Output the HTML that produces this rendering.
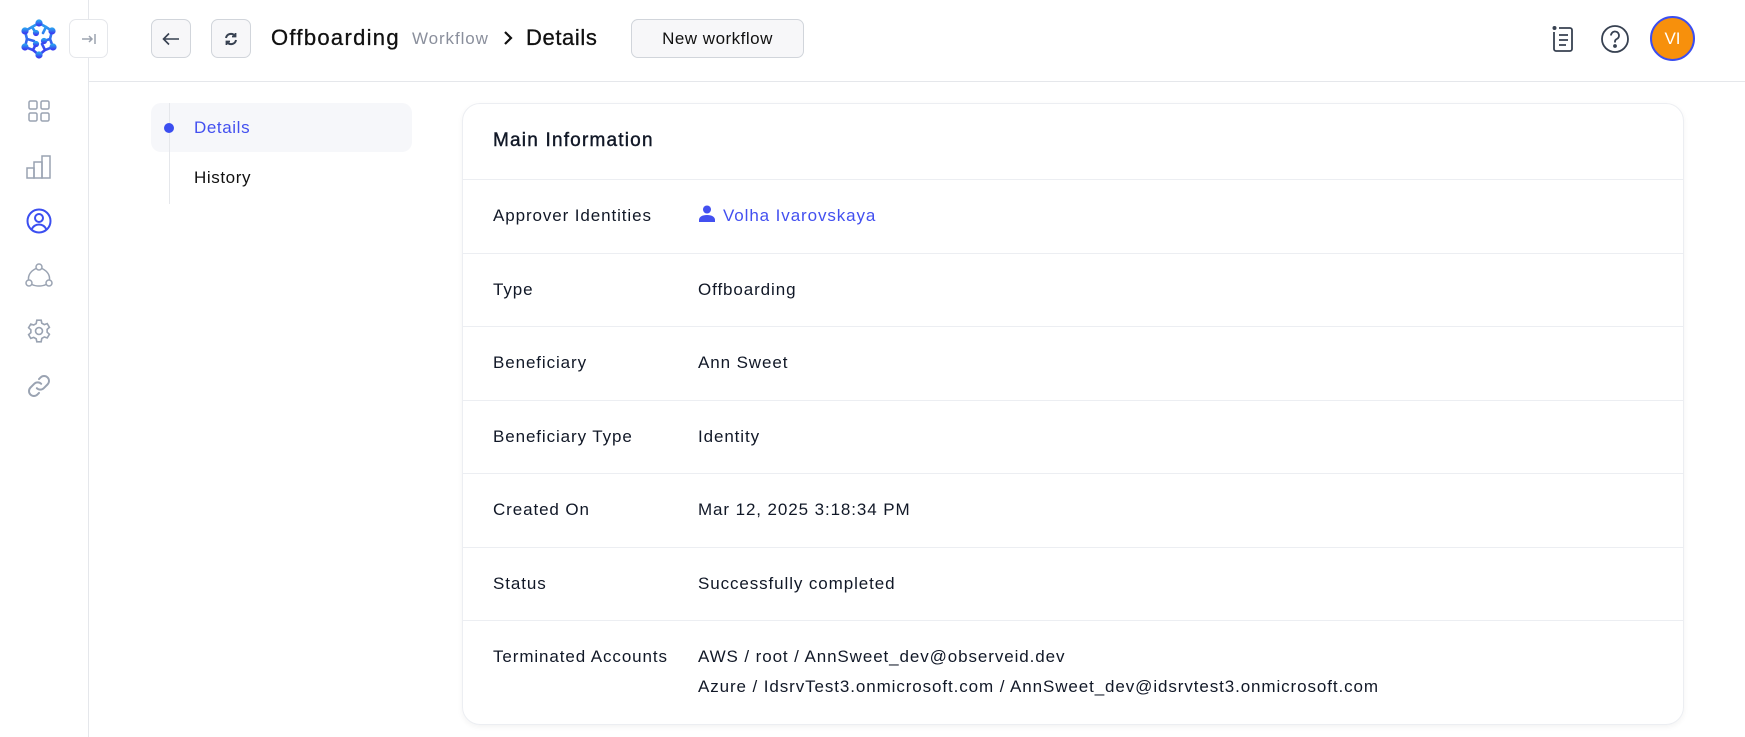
<!DOCTYPE html>
<html><head><meta charset="utf-8"><style>
*{box-sizing:border-box;margin:0;padding:0}
body{width:1745px;height:737px;background:#fff;font-family:"Liberation Sans",Arial,sans-serif;color:#111827;position:relative;overflow:hidden}
.abs{position:absolute}
.sb{left:0;top:0;width:89px;height:737px;border-right:1px solid #e5e7eb}
.hdr{left:89px;top:81px;width:1656px;height:1px;background:#e5e7eb}
.btn{border:1px solid #d1d5db;border-radius:7px;background:#f7f7f9;display:flex;align-items:center;justify-content:center}
.t{white-space:nowrap}
.card{left:462px;top:103px;width:1222px;height:622px;border:1px solid #eceef2;border-radius:18px;box-shadow:0 2px 6px rgba(0,0,0,.05)}
.sep{left:462px;width:1222px;height:1px;background:#eceef2}
.lbl{left:493px;font-size:17px;letter-spacing:0.9px;color:#111827}
.val{left:698px;font-size:17px;letter-spacing:0.9px;color:#111827}
</style></head><body>
<div class="abs sb"></div>
<div class="abs hdr"></div>
<svg class="abs" style="left:19px;top:19px" width="40" height="40" viewBox="0 0 40 40">
<defs><linearGradient id="g" x1="0" y1="0" x2="0" y2="1"><stop offset="0" stop-color="#2b9bf0"/><stop offset="1" stop-color="#3a3ff0"/></linearGradient></defs>
<g stroke="url(#g)" stroke-width="2.6" fill="url(#g)" stroke-linecap="round">
<path d="M20 4 L27 8 L33 12 L31 20 L34 28 L26 31 L20 36 L14 31 L6 28 L8 20 L6 12 L13 8 Z" fill="none"/>
<path d="M13 8 L17 14 M27 8 L24 14 M31 20 L25 22 M26 31 L23 25 M14 31 L17 25 M8 20 L15 22" fill="none"/>
<circle cx="20" cy="4" r="2.3"/><circle cx="33" cy="12" r="2.3"/><circle cx="34" cy="28" r="2.3"/><circle cx="20" cy="36" r="2.3"/><circle cx="6" cy="28" r="2.3"/><circle cx="6" cy="12" r="2.3"/>
<circle cx="17" cy="14" r="1.8"/><circle cx="25" cy="22" r="1.8"/><circle cx="17" cy="25" r="1.8"/>
</g></svg>
<div class="abs btn" style="left:69px;top:19px;width:39px;height:39px;background:#fff;border-color:#e5e7eb"><svg width="16" height="14" viewBox="0 0 16 14"><path d="M1 7h10M8 4l3 3-3 3M14 2v10" stroke="#9ca3af" stroke-width="1.5" fill="none"/></svg></div>
<svg class="abs" style="left:27px;top:99px" width="24" height="24" viewBox="0 0 24 24" fill="none" stroke="#9aa3b2" stroke-width="1.5"><rect x="2" y="2" width="8" height="8" rx="1.5"/><rect x="14" y="2" width="8" height="8" rx="1.5"/><rect x="2" y="14" width="8" height="8" rx="1.5"/><rect x="14" y="14" width="8" height="8" rx="1.5"/></svg>
<svg class="abs" style="left:26px;top:155px" width="26" height="24" viewBox="0 0 26 24" fill="none" stroke="#9aa3b2" stroke-width="1.5"><rect x="1" y="13" width="7" height="10"/><rect x="8" y="7" width="8" height="16"/><rect x="16" y="1" width="8" height="22"/></svg>
<svg class="abs" style="left:26px;top:208px" width="26" height="26" viewBox="0 0 26 26" fill="none" stroke="#3b4ef0" stroke-width="2"><circle cx="13" cy="13" r="11.5"/><circle cx="13" cy="10" r="4"/><path d="M5.5 21.5c2-4 5-5 7.5-5s5.5 1 7.5 5"/></svg>
<svg class="abs" style="left:25px;top:263px" width="28" height="26" viewBox="0 0 28 26" fill="none" stroke="#9aa3b2" stroke-width="1.5"><circle cx="14" cy="4" r="3"/><circle cx="4" cy="20" r="3"/><circle cx="24" cy="20" r="3"/><path d="M11 5.5C6 8 3 12 3.5 17M17 5.5C22 8 25 12 24.5 17M7 21.5c4 2 10 2 14 0"/></svg>
<svg class="abs" style="left:26px;top:318px" width="26" height="26" viewBox="0 0 24 24" fill="none" stroke="#9aa3b2" stroke-width="1.5"><circle cx="12" cy="12" r="3.2"/><path d="M10 2h4l.6 2.8 2.3 1.3 2.7-.9 2 3.4-2.1 1.9v2.6l2.1 1.9-2 3.4-2.7-.9-2.3 1.3L14 22h-4l-.6-2.8-2.3-1.3-2.7.9-2-3.4 2.1-1.9v-2.6L2.4 9l2-3.4 2.7.9 2.3-1.3z"/></svg>
<svg class="abs" style="left:26px;top:373px" width="26" height="26" viewBox="0 0 24 24" fill="none" stroke="#9aa3b2" stroke-width="1.8" stroke-linecap="round"><path d="M10 14a4.5 4.5 0 0 0 6.4 0l3.5-3.5a4.5 4.5 0 0 0-6.4-6.4l-1.5 1.5M14 10a4.5 4.5 0 0 0-6.4 0l-3.5 3.5a4.5 4.5 0 0 0 6.4 6.4l1.5-1.5"/></svg>
<div class="abs btn" style="left:151px;top:19px;width:40px;height:39px"><svg width="18" height="14" viewBox="0 0 18 14"><path d="M17 7H2M7 1.5L1.5 7 7 12.5" stroke="#374151" stroke-width="1.6" fill="none"/></svg></div>
<div class="abs btn" style="left:211px;top:19px;width:40px;height:39px"><svg width="14" height="14" viewBox="0 0 14 14" fill="none" stroke="#374151" stroke-width="2"><path d="M2 6a5 5 0 0 1 9-2M12 8a5 5 0 0 1-9 2"/><path d="M11.5 1v3.5H8M2.5 13V9.5H6" stroke-width="1.8"/></svg></div>
<div class="abs t" style="left:271px;top:24px;font-size:22px;line-height:28px;color:#111;letter-spacing:1.3px;-webkit-text-stroke:0.3px #111">Offboarding</div>
<div class="abs t" style="left:412px;top:29px;font-size:17px;line-height:20px;color:#8a8f9c;letter-spacing:0.9px">Workflow</div>
<svg class="abs" style="left:503px;top:30px" width="10" height="16" viewBox="0 0 10 16"><path d="M2 2l6 6-6 6" stroke="#111" stroke-width="2.2" fill="none"/></svg>
<div class="abs t" style="left:526px;top:24px;font-size:22px;line-height:28px;color:#111;letter-spacing:0.6px;-webkit-text-stroke:0.3px #111">Details</div>
<div class="abs btn" style="left:631px;top:19px;width:173px;height:39px;font-size:17px;letter-spacing:0.5px;color:#111">New workflow</div>
<svg class="abs" style="left:1551px;top:25px" width="26" height="28" viewBox="0 0 26 28" fill="none" stroke="#374151" stroke-width="1.8"><circle cx="3.5" cy="3" r="2" fill="#374151" stroke="none"/><path d="M3 7v17a2 2 0 0 0 2 2h14a2 2 0 0 0 2-2V5a2 2 0 0 0-2-2H8M8 10h9M8 15h9M8 20h7"/></svg>
<svg class="abs" style="left:1600px;top:24px" width="30" height="30" viewBox="0 0 30 30" fill="none" stroke="#374151" stroke-width="1.8"><circle cx="15" cy="15" r="13"/><path d="M11 11.5a4 4 0 1 1 5.5 3.7c-1 .5-1.5 1.2-1.5 2.3v1"/><circle cx="15" cy="22" r="1" fill="#374151"/></svg>
<div class="abs" style="left:1650px;top:16px;width:45px;height:45px;border-radius:50%;background:#f7900c;border:2px solid #3b4ef0;color:#fff;font-size:17px;display:flex;align-items:center;justify-content:center">VI</div>
<div class="abs" style="left:151px;top:103px;width:261px;height:49px;background:#f6f7fa;border-radius:10px"></div>
<div class="abs" style="left:169px;top:103px;width:1px;height:101px;background:#e5e7eb"></div>
<div class="abs" style="left:164px;top:123px;width:10px;height:10px;border-radius:50%;background:#3b4ef0"></div>
<div class="abs t" style="left:194px;top:118px;font-size:17px;color:#4350f0;letter-spacing:0.6px">Details</div>
<div class="abs t" style="left:194px;top:168px;font-size:17px;color:#111;letter-spacing:0.6px">History</div>
<div class="abs card"></div>
<div class="abs t" style="left:493px;top:130px;font-size:19px;color:#111827;letter-spacing:1.2px;-webkit-text-stroke:0.4px #111827">Main Information</div>
<div class="abs sep" style="top:179px"></div>
<div class="abs sep" style="top:253px"></div>
<div class="abs sep" style="top:326px"></div>
<div class="abs sep" style="top:400px"></div>
<div class="abs sep" style="top:473px"></div>
<div class="abs sep" style="top:547px"></div>
<div class="abs sep" style="top:620px"></div>
<div class="abs t lbl" style="top:206px">Approver Identities</div>
<svg class="abs" style="left:699px;top:205px" width="16" height="17" viewBox="0 0 16 17" fill="#4350f0"><circle cx="8" cy="4.5" r="4"/><path d="M0 17v-2c0-3 3-5 8-5s8 2 8 5v2z"/></svg>
<div class="abs t val" style="left:723px;top:206px;color:#4350f0">Volha Ivarovskaya</div>
<div class="abs t lbl" style="top:280px">Type</div><div class="abs t val" style="top:280px">Offboarding</div>
<div class="abs t lbl" style="top:353px">Beneficiary</div><div class="abs t val" style="top:353px">Ann Sweet</div>
<div class="abs t lbl" style="top:427px">Beneficiary Type</div><div class="abs t val" style="top:427px">Identity</div>
<div class="abs t lbl" style="top:500px">Created On</div><div class="abs t val" style="top:500px">Mar 12, 2025 3:18:34 PM</div>
<div class="abs t lbl" style="top:574px">Status</div><div class="abs t val" style="top:574px">Successfully completed</div>
<div class="abs t lbl" style="top:647px">Terminated Accounts</div>
<div class="abs t val" style="top:647px">AWS / root / AnnSweet_dev@observeid.dev</div>
<div class="abs t val" style="top:677px">Azure / IdsrvTest3.onmicrosoft.com / AnnSweet_dev@idsrvtest3.onmicrosoft.com</div>
</body></html>
